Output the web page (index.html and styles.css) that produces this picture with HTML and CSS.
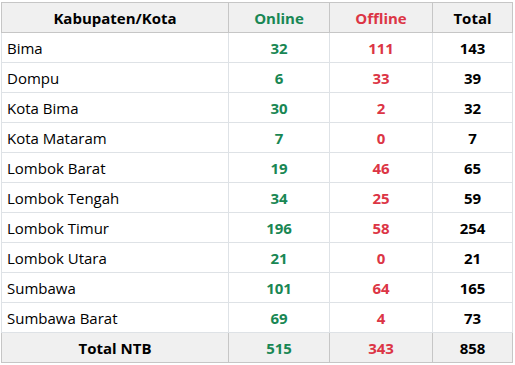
FILE: index.html
```html
<!DOCTYPE html>
<html lang="id">
<head>
<meta charset="utf-8">
<title>Rekap Kabupaten/Kota</title>
<link rel="stylesheet" href="styles.css">
</head>
<body>
<table class="rekap">
  <colgroup>
    <col class="c-name"><col class="c-on"><col class="c-off"><col class="c-tot">
  </colgroup>
  <thead>
    <tr><th>Kabupaten/Kota</th><th class="on">Online</th><th class="off">Offline</th><th>Total</th></tr>
  </thead>
  <tbody>
    <tr><td class="name">Bima</td><td class="on">32</td><td class="off">111</td><td class="tot">143</td></tr>
    <tr><td class="name">Dompu</td><td class="on">6</td><td class="off">33</td><td class="tot">39</td></tr>
    <tr><td class="name">Kota Bima</td><td class="on">30</td><td class="off">2</td><td class="tot">32</td></tr>
    <tr><td class="name">Kota Mataram</td><td class="on">7</td><td class="off">0</td><td class="tot">7</td></tr>
    <tr><td class="name">Lombok Barat</td><td class="on">19</td><td class="off">46</td><td class="tot">65</td></tr>
    <tr><td class="name">Lombok Tengah</td><td class="on">34</td><td class="off">25</td><td class="tot">59</td></tr>
    <tr><td class="name">Lombok Timur</td><td class="on">196</td><td class="off">58</td><td class="tot">254</td></tr>
    <tr><td class="name">Lombok Utara</td><td class="on">21</td><td class="off">0</td><td class="tot">21</td></tr>
    <tr><td class="name">Sumbawa</td><td class="on">101</td><td class="off">64</td><td class="tot">165</td></tr>
    <tr><td class="name">Sumbawa Barat</td><td class="on">69</td><td class="off">4</td><td class="tot">73</td></tr>
  </tbody>
  <tfoot>
    <tr><th>Total NTB</th><th class="on">515</th><th class="off">343</th><th>858</th></tr>
  </tfoot>
</table>
</body>
</html>
```
FILE: styles.css
```css
html, body {
  margin: 0;
  padding: 0;
  background: #ffffff;
}
body {
  padding: 2px 0 0 1px;
  font-family: "Open Sans", "Noto Sans", sans-serif;
  font-size: 15px;
  color: #000000;
}
.rekap {
  border-collapse: collapse;
  table-layout: fixed;
  width: 511px;
  border: 1px solid #c6c6c6;
}
.c-name { width: 227px; }
.c-on { width: 101px; }
.c-off { width: 103px; }
.c-tot { width: 80px; }
.rekap th,
.rekap td {
  height: 30px;
  padding: 0 5px;
  box-sizing: border-box;
  line-height: 20px;
  text-align: center;
  font-weight: 700;
  border: 1px solid #dee2e6;
}
.rekap thead th,
.rekap tfoot th {
  background: #f0f0f0;
  border-color: #c6c6c6;
}
.rekap td.name {
  text-align: left;
  font-weight: 400;
}
.on { color: #198754; }
.off { color: #dc3545; }
.tot { color: #000000; }
```
